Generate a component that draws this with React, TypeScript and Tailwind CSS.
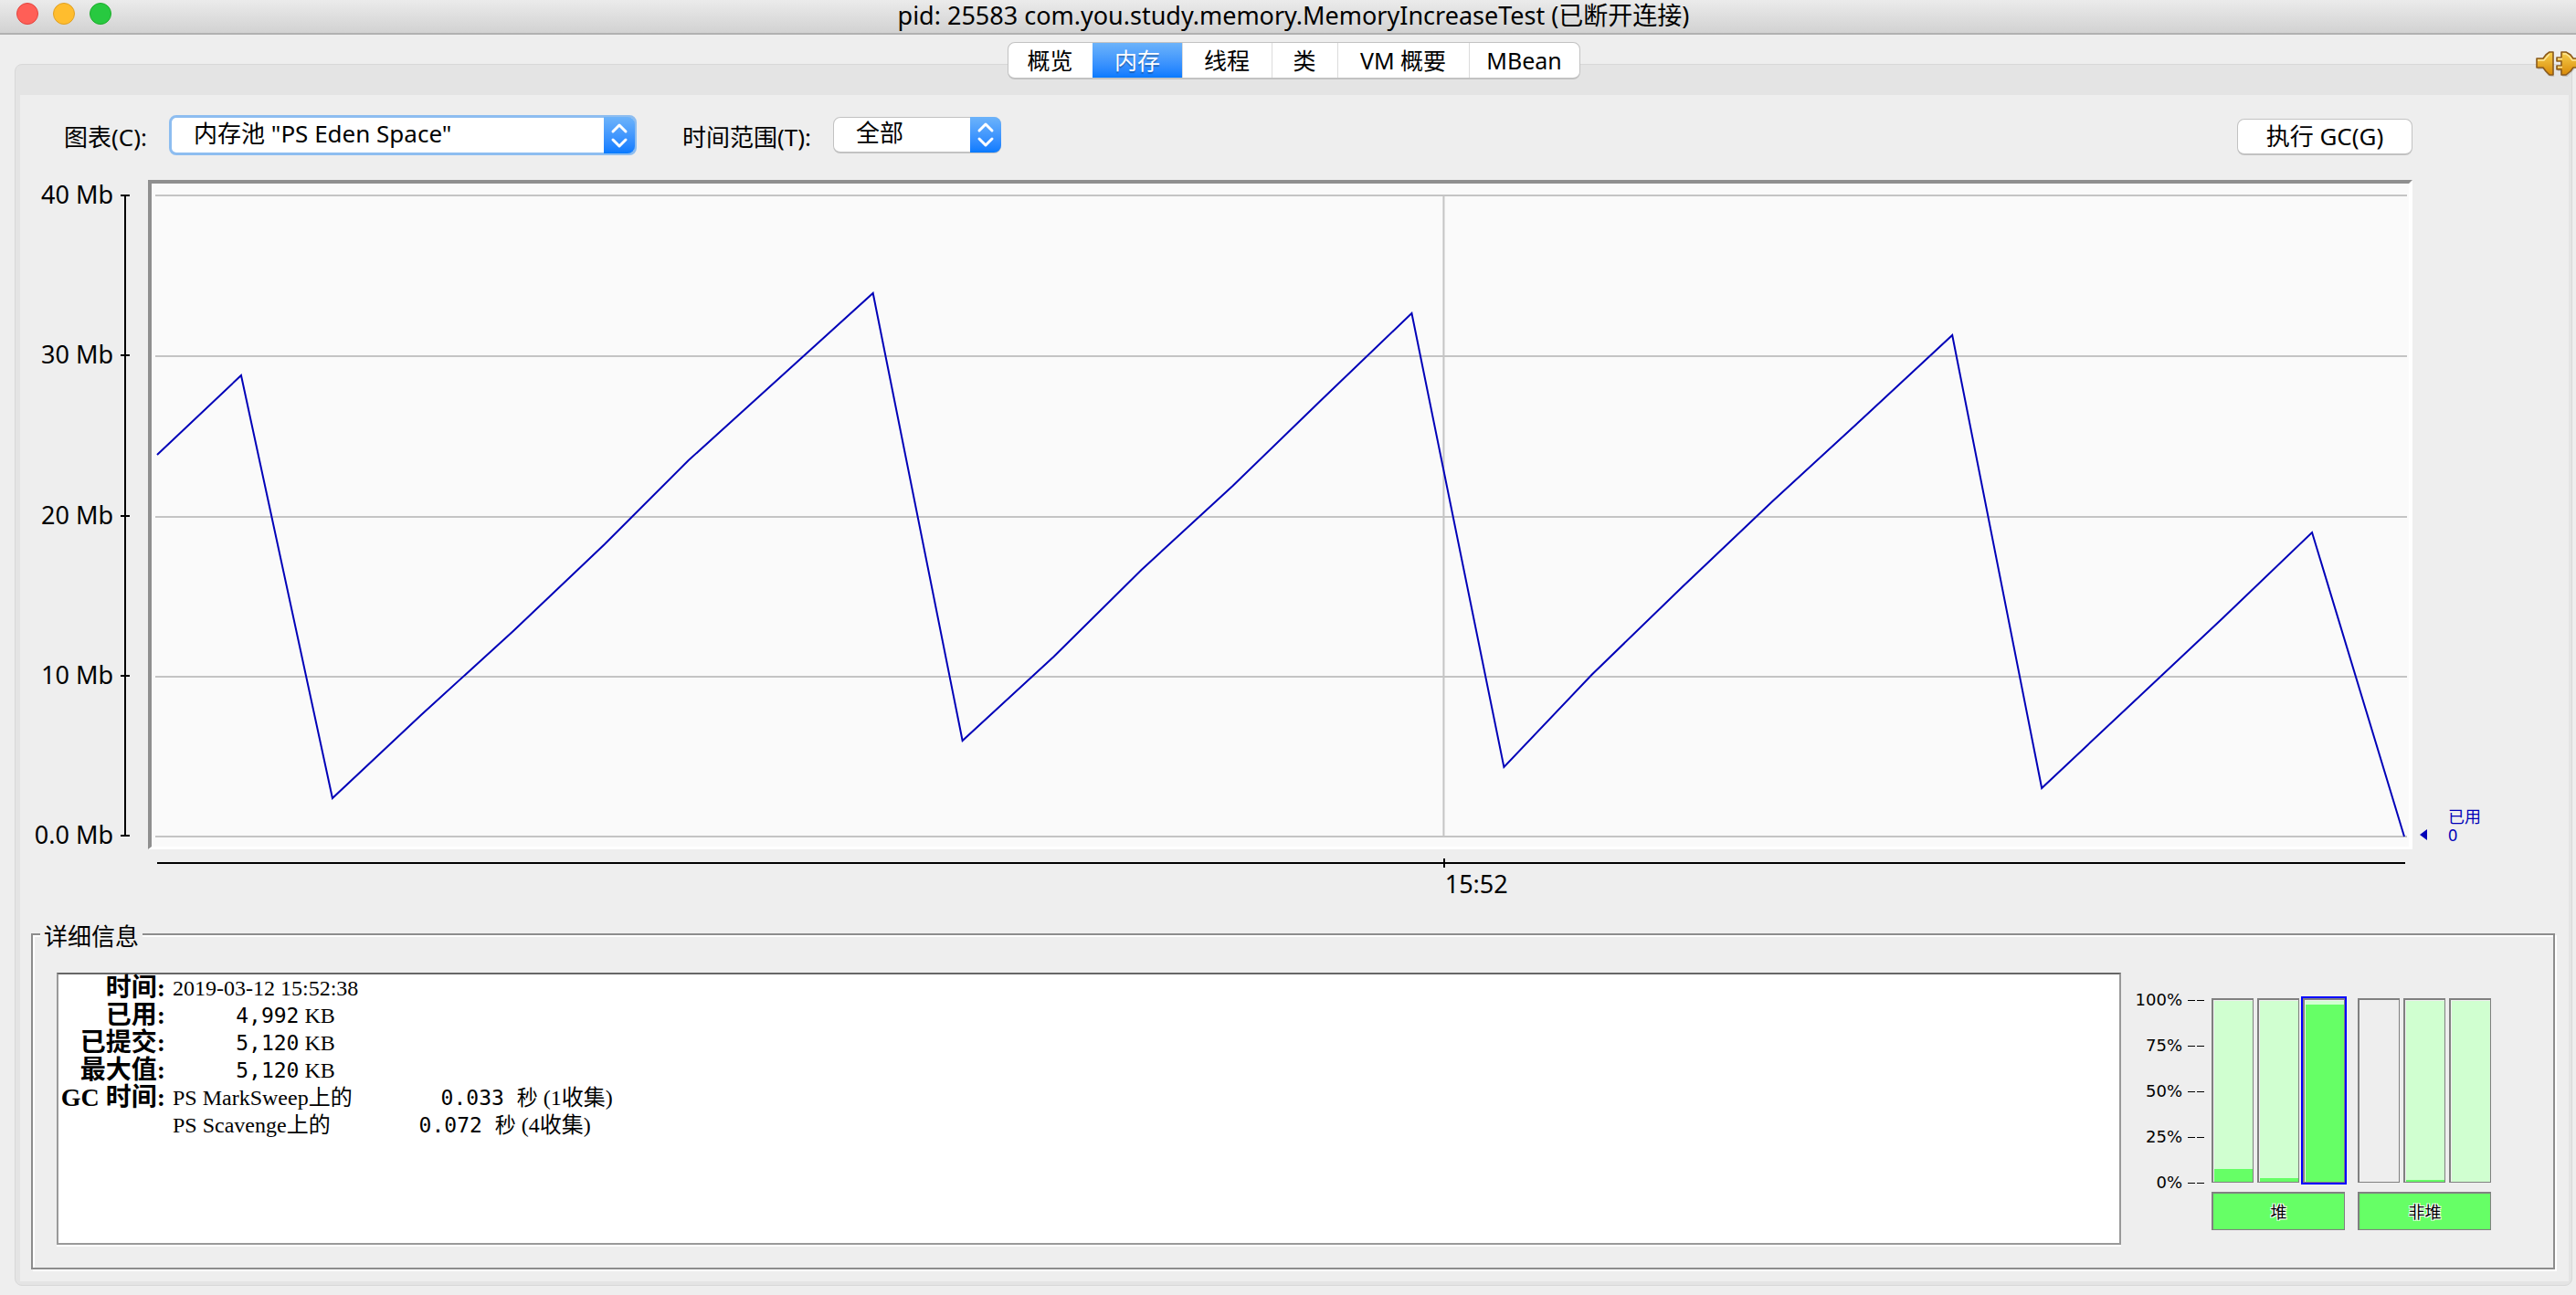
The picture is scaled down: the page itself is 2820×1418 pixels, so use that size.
import React from "react";

const SANS = "font-['Noto_Sans','Noto_Sans_CJK_SC',sans-serif]";

const PLOT_WIDTH = 2466;
const PLOT_HEIGHT = 704;

const samples: [number, number][] = [
  [2, 285], [94, 198], [194, 661], [291, 570], [392, 478], [492, 383], [584, 291], [690, 195], [786, 108],
  [884, 598], [984, 506], [1080, 411], [1180, 319], [1278, 224], [1376, 130], [1477, 627], [1573, 526],
  [1672, 430], [1771, 336], [1870, 245], [1968, 154], [2066, 650], [2165, 557], [2264, 464], [2362, 370], [2463, 703],
];

function Chevrons() {
  return (
    <span className="pointer-events-none absolute -inset-y-px -right-px flex w-8.5 items-center justify-center rounded-r-lg bg-linear-to-b from-[#6cb3fa] to-[#067aff]">
      <svg viewBox="0 0 34 40" className="h-10 w-8.5" fill="none" stroke="white" strokeWidth="3" strokeLinecap="round" strokeLinejoin="round">
        <path d="M10 16 L17 9 L24 16 M10 25 L17 32 L24 25" />
      </svg>
    </span>
  );
}

function Plug() {
  return (
    <svg viewBox="0 0 44 28" className="absolute right-0 top-14 z-10 h-7 w-11" role="img" aria-label="disconnected">
      <defs>
        <linearGradient id="brass" x1="0" y1="0" x2="0" y2="1">
          <stop offset="0" stopColor="#f7cf4e" />
          <stop offset="1" stopColor="#d98a08" />
        </linearGradient>
      </defs>
      <path d="M2 19 H9 L14 26 L20 28 M24 21 H28 L30 27 H34 L42 19" stroke="#0002" strokeWidth="2" fill="none" />
      <g stroke="#8a5a1c" strokeWidth="1.6" fill="url(#brass)" strokeLinejoin="round">
        <path d="M1 8 H8 L11 4 L15 1 H19 V26 H15 L11 22 L8 18 H1 Z" />
        <path d="M28 1 H33 L38 4 L41 8 H46 V18 H41 L38 22 L33 26 H28 V20 H23 V16 H28 V11 H23 V7 H28 Z" />
      </g>
      <path d="M2 10 H9 L15 3 M30 3 H33 L37 6 L40 10 H44 M24 8.500 H29 M24 17.500 H29" stroke="#fde79a" strokeWidth="1.500" fill="none" />
    </svg>
  );
}

function Bar({ fill, empty, selected }: { fill: number; empty?: boolean; selected?: boolean }) {
  return (
    <div className={`h-[202px] w-[46px] border border-l-2 border-t-2 border-[#808080] bg-[#f0f0f0] pl-px pt-px ${selected ? "outline-2 outline-[#0000ff]" : ""}`}>
      <div className={`flex h-full flex-col justify-end ${empty ? "bg-[#eeeeee]" : "bg-[#d0ffd0]"}`}>
        <div className="bg-[#66ff66]" style={{ height: `${fill}%` }} />
      </div>
    </div>
  );
}

function Group({ name, children }: { name: string; children: React.ReactNode }) {
  return (
    <div className="flex flex-col gap-2.5">
      <div className="flex gap-1">{children}</div>
      <button
        type="button"
        className="h-[42px] border border-l-2 border-t-2 border-[#808080] bg-[#66ff66] text-lg leading-none [text-shadow:1px_1px_0_#fff,-1px_-1px_0_#fff,1px_-1px_0_#fff,-1px_1px_0_#fff]"
      >
        {name}
      </button>
    </div>
  );
}

function Mono({ children }: { children: React.ReactNode }) {
  return <span className="whitespace-pre font-['DejaVu_Sans_Mono','Noto_Sans_CJK_SC',monospace] text-[23px] leading-none">{children}</span>;
}

const tabs = [
  ["概览", "w-[92px]"],
  ["内存", "w-[98px]"],
  ["线程", "w-[98px]"],
  ["类", "w-[72px]"],
  ["VM 概要", "w-[144px]"],
  ["MBean", "w-[121px]"],
];

const rows: [string, React.ReactNode][] = [
  ["时间:", "2019-03-12 15:52:38"],
  ["已用:", <><Mono>{"     4,992"}</Mono> KB</>],
  ["已提交:", <><Mono>{"     5,120"}</Mono> KB</>],
  ["最大值:", <><Mono>{"     5,120"}</Mono> KB</>],
  ["GC 时间:", <>PS MarkSweep上的<Mono>{"       0.033 秒"}</Mono> (1收集)</>],
  ["", <>PS Scavenge上的<Mono>{"       0.072 秒"}</Mono> (4收集)</>],
];

function Plot() {
  const line = { vectorEffect: "non-scaling-stroke" as const };
  return (
    <div className="flex flex-1 flex-col border-4 border-b-[3px] border-b-white border-l-[#8f8f8f] border-r-white border-t-[#8f8f8f] bg-[#fafafa] pb-2.5 pl-1 pr-0.5 pt-3">
      <svg viewBox={`0 0 ${PLOT_WIDTH} ${PLOT_HEIGHT}`} preserveAspectRatio="none" className="min-h-0 w-full flex-1 overflow-visible" fill="none">
        <g stroke="#c4c4c4" strokeWidth="2">
          {[1, 177, 353, 528, 703].map((y) => (
            <path key={y} d={`M0 ${y} H${PLOT_WIDTH}`} {...line} />
          ))}
          <path d={`M1411 0 V${PLOT_HEIGHT}`} {...line} />
        </g>
        <polyline points={samples.map((p) => p.join(",")).join(" ")} stroke="#0000b8" strokeWidth="2" {...line} />
      </svg>
    </div>
  );
}

export default function App() {
  return (
    <div className={`relative flex min-h-screen flex-col bg-[#eeeeee] text-[26px] leading-8 text-black ${SANS}`}>
      <header className="grid h-[38px] grid-cols-[1fr_auto_1fr] items-center border-b-2 border-[#b1b1b1] bg-linear-to-b from-[#ebebeb] to-[#d2d2d2]">
        <div className="flex gap-4 pb-1.5 pl-[18px]">
          <button type="button" aria-label="close" className="size-6 rounded-full border border-[#e2453f] bg-[#ff5f57]" />
          <button type="button" aria-label="minimize" className="size-6 rounded-full border border-[#dfa023] bg-[#ffbd2e]" />
          <button type="button" aria-label="zoom" className="size-6 rounded-full border border-[#1dad2b] bg-[#28c940]" />
        </div>
        <h1 className="pb-0.5 pl-3 text-[27px]">pid: 25583 com.you.study.memory.MemoryIncreaseTest (已断开连接)</h1>
      </header>
      <Plug />

      <main className="mb-2.5 ml-4 mr-1 mt-8 flex flex-1 flex-col rounded-lg border border-[#d8d8d8] bg-[#e4e4e4] pb-1 pl-[5px] pr-[3px]">
        <nav className="z-10 -mt-[25px] mb-[17px] flex justify-center pr-0.5">
          <div role="tablist" className="flex h-[41px] overflow-hidden rounded-lg border border-b-2 border-[#c2c2c2] bg-white text-[25px]">
            {tabs.map(([name, width], i) => (
              <button
                key={name}
                type="button"
                role="tab"
                aria-selected={i === 1}
                className={`${width} border-l first:border-l-0 ${i === 1 ? "border-transparent bg-linear-to-b from-[#6cb3fa] to-[#067aff] text-white [text-shadow:0_2px_1px_#0004]" : "border-[#dcdcdc]"}`}
              >
                {name}
              </button>
            ))}
          </div>
        </nav>

        <div className="flex flex-1 flex-col bg-[#eeeeee]">
          <div className="flex h-[93px] items-center pb-0.5 pl-12 pr-[171px]">
            <label htmlFor="pool" className="mr-6">图表(C):</label>
            <div className="relative mb-1 mr-[50px] h-11 w-[512px] rounded-lg border-3 border-[#8dbdf0] bg-white">
              <select id="pool" className="h-full w-full appearance-none pb-1 pl-6">
                <option>内存池 "PS Eden Space"</option>
              </select>
              <Chevrons />
            </div>
            <label htmlFor="range" className="mr-6">时间范围(T):</label>
            <div className="relative mb-1 h-10 w-[184px] rounded-lg border border-b-2 border-[#c2c2c2] bg-white">
              <select id="range" className="h-full w-full appearance-none pb-1 pl-6">
                <option>全部</option>
              </select>
              <Chevrons />
            </div>
            <button type="button" className="ml-auto h-10 w-48 rounded-lg border border-b-2 border-[#c2c2c2] bg-white">执行 GC(G)</button>
          </div>

          <div className="flex flex-1">
            <div className="flex w-[102px] flex-col items-end justify-between text-[27px]">
              {["40 Mb", "30 Mb", "20 Mb", "10 Mb", "0.0 Mb"].map((t) => (
                <span key={t}>{t}</span>
              ))}
            </div>
            <div className="grid w-[38px] pb-3.5 pt-4 *:[grid-area:1/1]">
              <div className="ml-3 w-0.5 justify-self-start bg-black" />
              <div className="ml-2 flex w-2.5 flex-col justify-between justify-self-start">
                {[0, 1, 2, 3, 4].map((t) => (
                  <i key={t} className="h-0.5 bg-black" />
                ))}
              </div>
            </div>
            <Plot />
            <div className="flex w-[171px] items-end pb-1.5 pl-2 text-lg leading-5 text-[#0000b8]">
              <svg viewBox="0 0 8 12" className="mb-1 mr-[23px] h-3 w-2" fill="currentColor">
                <path d="M8 0 V12 L0 6 Z" />
              </svg>
              <div className="flex flex-col">
                <span>已用</span>
                <span>0</span>
              </div>
            </div>
          </div>

          <div className="ml-[150px] mr-[179px] pt-2.5">
            <div className="grid h-2.5 items-center *:[grid-area:1/1]">
              <div className="h-0.5 bg-black" />
              <div className="grid h-full grid-cols-[572fr_428fr]">
                <i />
                <i className="border-l-2 border-black" />
              </div>
            </div>
            <div className="grid grid-cols-[572fr_428fr] pt-0.5 text-[27px]">
              <i />
              <span className="pl-0.5">15:52</span>
            </div>
          </div>

          <fieldset className="mb-[13px] ml-3 mr-[15px] mt-[21px] min-w-0 border-2 border-[#8c8c8c] shadow-[inset_2px_2px_0_#fff,2px_2px_0_#fff]">
            <legend className="ml-2 bg-[#eeeeee] px-1 pt-1">详细信息</legend>
            <div className="flex pb-[25px] pl-[26px] pr-[68px] pt-6">
              <div className="h-[298px] flex-1 border-2 border-[#999999] border-t-[#666666] bg-white shadow-[0_2px_0_#fff]">
                <table className="font-['Liberation_Serif','Noto_Sans_CJK_SC',serif] text-2xl leading-none">
                  <tbody>
                    {rows.map(([name, value], i) => (
                      <tr key={i} className="h-[30px]">
                        <th scope="row" className="w-[117px] whitespace-nowrap p-0 text-right text-[28px] font-bold leading-7">{name}</th>
                        <td className="whitespace-nowrap py-0 pl-2 leading-7">{value}</td>
                      </tr>
                    ))}
                  </tbody>
                </table>
              </div>
              <div className="mr-2 mt-5 flex h-[220px] w-[91px] flex-col justify-between font-['DejaVu_Sans',sans-serif] text-lg leading-5">
                {["100%", "75%", "50%", "25%", "0%"].map((t) => (
                  <div key={t} className="flex items-center justify-end">
                    <span className="mr-1.5">{t}</span>
                    <i className="mr-0.5 h-px w-2 bg-black" />
                    <i className="h-px w-2 bg-black" />
                  </div>
                ))}
              </div>
              <div className="flex gap-3.5 pt-7">
                <Group name="堆">
                  <Bar fill={7} />
                  <Bar fill={2} />
                  <Bar fill={98} selected />
                </Group>
                <Group name="非堆">
                  <Bar fill={0} empty />
                  <Bar fill={1} />
                  <Bar fill={0} />
                </Group>
              </div>
            </div>
          </fieldset>
        </div>
      </main>
    </div>
  );
}
